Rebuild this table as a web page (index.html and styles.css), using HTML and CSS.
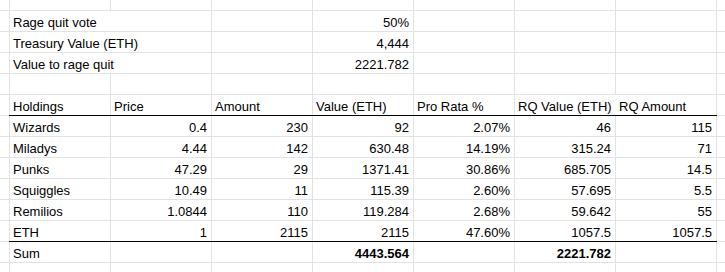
FILE: index.html
```html
<!DOCTYPE html>
<html lang="en">
<head>
<meta charset="utf-8">
<title>Rage quit sheet</title>
<link rel="stylesheet" href="styles.css">
</head>
<body>
<div class="sheet">
  <!-- top partial row -->
  <div class="c"></div><div class="c"></div><div class="c"></div><div class="c"></div><div class="c"></div><div class="c"></div><div class="c"></div><div class="c"></div><div class="c"></div>

  <div class="c"></div><div class="c span2">Rage quit vote</div><div class="c"></div><div class="c n">50%</div><div class="c"></div><div class="c"></div><div class="c"></div><div class="c"></div>
  <div class="c"></div><div class="c span2">Treasury Value (ETH)</div><div class="c"></div><div class="c n">4,444</div><div class="c"></div><div class="c"></div><div class="c"></div><div class="c"></div>
  <div class="c"></div><div class="c span2">Value to rage quit</div><div class="c"></div><div class="c n">2221.782</div><div class="c"></div><div class="c"></div><div class="c"></div><div class="c"></div>

  <div class="c"></div><div class="c"></div><div class="c"></div><div class="c"></div><div class="c"></div><div class="c"></div><div class="c"></div><div class="c"></div><div class="c"></div>

  <div class="c"></div>
  <div class="c line first">Holdings</div>
  <div class="c line">Price</div>
  <div class="c line">Amount</div>
  <div class="c line">Value (ETH)</div>
  <div class="c line">Pro Rata %</div>
  <div class="c line spill">RQ Value (ETH)</div>
  <div class="c line">RQ Amount</div>
  <div class="c"></div>

  <div class="c"></div><div class="c">Wizards</div><div class="c n">0.4</div><div class="c n">230</div><div class="c n">92</div><div class="c n">2.07%</div><div class="c n">46</div><div class="c n">115</div><div class="c"></div>
  <div class="c"></div><div class="c">Miladys</div><div class="c n">4.44</div><div class="c n">142</div><div class="c n">630.48</div><div class="c n">14.19%</div><div class="c n">315.24</div><div class="c n">71</div><div class="c"></div>
  <div class="c"></div><div class="c">Punks</div><div class="c n">47.29</div><div class="c n">29</div><div class="c n">1371.41</div><div class="c n">30.86%</div><div class="c n">685.705</div><div class="c n">14.5</div><div class="c"></div>
  <div class="c"></div><div class="c">Squiggles</div><div class="c n">10.49</div><div class="c n">11</div><div class="c n">115.39</div><div class="c n">2.60%</div><div class="c n">57.695</div><div class="c n">5.5</div><div class="c"></div>
  <div class="c"></div><div class="c">Remilios</div><div class="c n">1.0844</div><div class="c n">110</div><div class="c n">119.284</div><div class="c n">2.68%</div><div class="c n">59.642</div><div class="c n">55</div><div class="c"></div>
  <div class="c"></div><div class="c line first">ETH</div><div class="c n line">1</div><div class="c n line">2115</div><div class="c n line">2115</div><div class="c n line">47.60%</div><div class="c n line">1057.5</div><div class="c n line">1057.5</div><div class="c"></div>
  <div class="c"></div><div class="c">Sum</div><div class="c"></div><div class="c"></div><div class="c n b">4443.564</div><div class="c"></div><div class="c n b">2221.782</div><div class="c"></div><div class="c"></div>

  <!-- bottom partial row -->
  <div class="c"></div><div class="c"></div><div class="c"></div><div class="c"></div><div class="c"></div><div class="c"></div><div class="c"></div><div class="c"></div><div class="c"></div>
</div>
</body>
</html>
```
FILE: styles.css
```css
html, body {
  margin: 0;
  padding: 0;
  background: #ffffff;
}

.sheet {
  width: 725px;
  height: 272px;
  overflow: hidden;
  display: grid;
  grid-template-columns: 9px repeat(7, 100px) 8px;
  grid-template-rows: 10px repeat(12, 20px) 9px;
  gap: 1px;
  background: #e2e2e2;
  font-family: "Liberation Sans", Arial, sans-serif;
  font-size: 13px;
  color: #000000;
}

.c {
  background: #ffffff;
  display: flex;
  align-items: flex-end;
  padding: 0 4px 0 3px;
  line-height: 17px;
  white-space: nowrap;
  min-width: 0;
}

.span2 {
  grid-column: span 2;
}

.n {
  justify-content: flex-end;
}

.b {
  font-weight: bold;
}

/* black rule under a row, drawn over the gridline */
.line {
  position: relative;
}

.line::after {
  content: "";
  position: absolute;
  left: 0;
  right: -1px;
  bottom: -1px;
  height: 1px;
  background: #000000;
}

.line.first::after {
  left: -1px;
}

/* text spills into the next cell: hide the gridline between them */
.spill {
  box-shadow: 1px 0 0 #ffffff;
}
```
